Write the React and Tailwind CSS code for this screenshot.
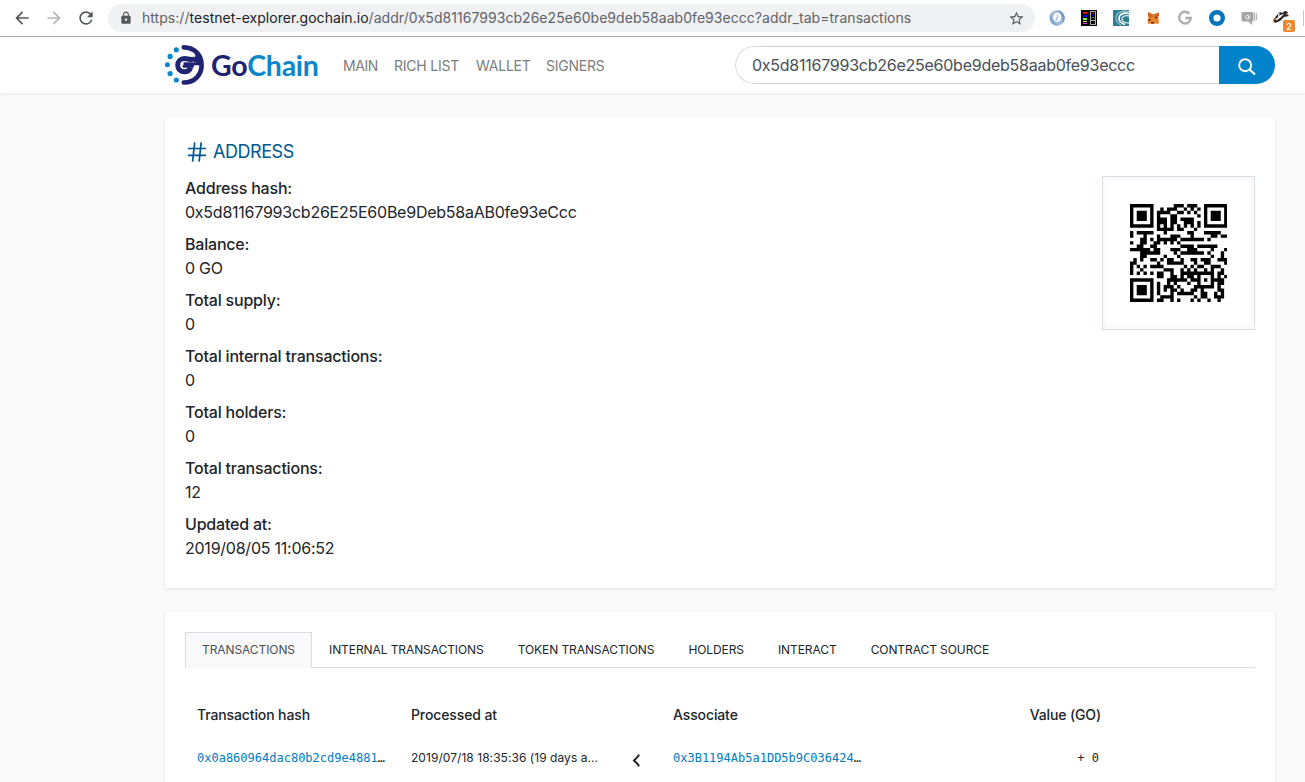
import React from "react";
import { MdArrowBack, MdArrowForward, MdRefresh, MdLock, MdStarBorder } from "react-icons/md";

const SIZE = 29;
const DATA_WORDS = 44;
const EC_WORDS = 26;

function gfMultiply(a, b) {
  let r = 0;
  for (let i = 7; i >= 0; i--) {
    r = (r << 1) ^ ((r >> 7) * 0x11d);
    r ^= ((b >> i) & 1) * a;
  }
  return r;
}

// Version 3 QR code, error correction level M, mask 2.
function buildQr(segments) {
  const bits = [];
  const push = (v, n) => {
    for (let i = n - 1; i >= 0; i--) bits.push((v >> i) & 1);
  };
  for (const [mode, text] of segments) {
    if (mode === "numeric") {
      push(1, 4);
      push(text.length, 10);
      for (let i = 0; i < text.length; i += 3) {
        const part = text.slice(i, i + 3);
        push(Number(part), part.length * 3 + 1);
      }
    } else {
      push(4, 4);
      push(text.length, 8);
      for (const c of text) push(c.charCodeAt(0), 8);
    }
  }
  push(0, 4);
  while (bits.length % 8) bits.push(0);
  for (let p = 0; bits.length < DATA_WORDS * 8; p++) push(p % 2 ? 0x11 : 0xec, 8);
  const data = [];
  for (let i = 0; i < DATA_WORDS * 8; i += 8) data.push(parseInt(bits.slice(i, i + 8).join(""), 2));

  const gen = Array(EC_WORDS).fill(0);
  gen[EC_WORDS - 1] = 1;
  let root = 1;
  for (let i = 0; i < EC_WORDS; i++) {
    for (let j = 0; j < EC_WORDS; j++) {
      gen[j] = gfMultiply(gen[j], root);
      if (j + 1 < EC_WORDS) gen[j] ^= gen[j + 1];
    }
    root = gfMultiply(root, 2);
  }
  const ec = Array(EC_WORDS).fill(0);
  for (const b of data) {
    const f = b ^ ec.shift();
    ec.push(0);
    gen.forEach((c, i) => (ec[i] ^= gfMultiply(c, f)));
  }
  const words = data.concat(ec);

  const m = Array.from({ length: SIZE }, () => Array(SIZE).fill(null));
  const set = (r, c, v) => {
    if (r >= 0 && c >= 0 && r < SIZE && c < SIZE) m[r][c] = v ? 1 : 0;
  };
  for (let i = 0; i < SIZE; i++) {
    set(6, i, i % 2 === 0);
    set(i, 6, i % 2 === 0);
  }
  for (const [r, c] of [[3, 3], [3, 25], [25, 3]]) {
    for (let a = -4; a <= 4; a++) {
      for (let b = -4; b <= 4; b++) {
        const d = Math.max(Math.abs(a), Math.abs(b));
        set(r + a, c + b, d !== 2 && d !== 4);
      }
    }
  }
  for (let a = -2; a <= 2; a++) {
    for (let b = -2; b <= 2; b++) set(22 + a, 22 + b, Math.max(Math.abs(a), Math.abs(b)) !== 1);
  }
  const format = 0b101111001111100;
  const bit = (i) => (format >> i) & 1;
  for (let i = 0; i <= 5; i++) set(i, 8, bit(i));
  set(7, 8, bit(6));
  set(8, 8, bit(7));
  set(8, 7, bit(8));
  for (let i = 9; i < 15; i++) set(8, 14 - i, bit(i));
  for (let i = 0; i < 8; i++) set(8, SIZE - 1 - i, bit(i));
  for (let i = 8; i < 15; i++) set(SIZE - 15 + i, 8, bit(i));
  set(SIZE - 8, 8, 1);

  let k = 0;
  for (let right = SIZE - 1; right >= 1; right -= 2) {
    if (right === 6) right = 5;
    for (let v = 0; v < SIZE; v++) {
      for (let j = 0; j < 2; j++) {
        const x = right - j;
        const y = ((right + 1) & 2) === 0 ? SIZE - 1 - v : v;
        if (m[y][x] === null) {
          const b = k < words.length * 8 ? (words[k >> 3] >> (7 - (k & 7))) & 1 : 0;
          k++;
          m[y][x] = b ^ (x % 3 === 0 ? 1 : 0);
        }
      }
    }
  }
  return m;
}

const QR = buildQr([
  ["byte", "0x5d"],
  ["numeric", "81167993"],
  ["byte", "cb26e25e60be9deb58aab0fe93eccc"],
]);
const QR_PATH = QR.flatMap((row, y) => row.map((v, x) => (v ? `M${x} ${y}h1v1h-1z` : ""))).join("");

function Extensions() {
  return (
    <div className="flex items-center gap-4">
      <svg width="16" height="16" viewBox="0 0 16 16">
        <circle cx="8" cy="8" r="7.7" fill="#a3bbd8" />
        <path d="M8 .3a7.7 7.7 0 0 1 5 13.5C15 9 13 3 8 .3Z" fill="#6f96c4" />
        <path d="M3 2.500C1 8 4 13 9 15.500 3 15.500-1.500 8 3 2.500Z" fill="#7d9dc5" />
        <ellipse cx="8.200" cy="7.300" rx="4" ry="4.600" fill="#fff" />
        <path d="M7.500 3.500c2.500 1.500 2.500 4.500 .2 7.500-1-.5-1.500-1.500-1.500-1.500 1.500-2 2-4 1.300-6Z" fill="#b3c8e0" />
      </svg>
      <svg width="16" height="16" viewBox="0 0 16 16" shapeRendering="crispEdges">
        <path d="M0 0h16v16H0z" fill="#000" />
        <path d="M8 1h1v14H8zM10 10h4v1h-4zM9 1h1v14H9zM14 1h1v14h-1zM9 1h6v1H9zM9 14h6v1H9z" fill="#aaa" />
        <path d="M8 0h1v16H8z" fill="#000" />
        <path d="M2 2h4v2H2z" fill="#f00" />
        <path d="M2 5h4v2H2z" fill="#00f" />
        <path d="M2 8h4v2H2z" fill="#6f3" />
        <path d="M11 7h2v1h-2z" fill="#3a3" />
        <path d="M2 11h4v1H2z" fill="#fe4" />
        <path d="M2 13h4v1H2z" fill="#f3f" />
        <path d="M11 3h2v1h-2z" fill="#f00" />
        <path d="M11 5h2v1h-2z" fill="#00f" />
      </svg>
      <svg width="16" height="16" viewBox="0 0 16 16" fill="none">
        <path d="M0 0h16v16H0z" fill="#2f7f92" />
        <path d="M16 1.500C9 0 3 3 3 8c0 3 2 5.500 5 7" stroke="#9fc9d2" strokeWidth="1.100" />
        <path d="M16 3.500C10 2 6 4.500 6 8.500c0 3 3 5 6 6" stroke="#fff" strokeWidth="1.700" />
        <path d="M16 6c-4-1-7 .5-7 3s3 4 7 4" stroke="#d5e9ed" strokeWidth="1.300" />
      </svg>
      <svg width="16" height="16" viewBox="0 0 16 16">
        <path d="m3 2 4 2h3l4-1.500-.6 5 .6 4.500-1 2-3-.5-2 .5-3-.5-2 .5-.5-3 1-4Z" fill="#e8862f" />
        <path d="m3 2 4 2 1 3-3 1-2-2Zm11 .5L10 4 9 7l3 1 2-2Z" fill="#d0661d" />
        <path d="M3.500 9h2v2h-2zM10 7h2v1.500h-2zM6 12h3v1.500H6z" fill="#6b3512" />
      </svg>
      <svg width="16" height="16" viewBox="0 0 16 16" fill="none" stroke="#b0b0b0" strokeWidth="2.400">
        <path d="M12.400 3.800A5.800 5.800 0 1 0 13.800 8H8.300" />
      </svg>
      <svg width="16" height="16" viewBox="0 0 16 16">
        <circle cx="8" cy="8" r="5.800" fill="#fff" stroke="#0673bd" strokeWidth="4.400" />
      </svg>
      <svg width="16" height="16" viewBox="0 0 16 16">
        <path d="M2 2h9a1.500 1.500 0 0 1 1.500 1.500V10A1.500 1.500 0 0 1 11 11.500V15L7.500 11.500H2A1.500 1.500 0 0 1 .5 10V3.500A1.500 1.500 0 0 1 2 2ZM13.200 2.500h1V11h-1zM15 3h.8v7H15z" fill="#a6a6a6" />
        <path d="M8 5.200v4M8 7a1.700 1.700 0 1 0 0 .4" stroke="#fff" fill="none" strokeWidth=".9" />
      </svg>
      <div className="relative h-4 w-4">
        <svg width="16" height="16" viewBox="0 0 16 16">
          <path d="m0 10 4-5 3-3 2 1 3-2 3 1-1 2 2 2-5 1-4 4-5 2Z" fill="#222" />
          <path d="m2.500 9.500 4-4 5-2-4 4-4 3ZM5 4.500l2.500-1.500L5 7Z" fill="#fff" />
          <path d="M0 9.500 3 7l-.5 2.500L0 12ZM13 3l2 1-2 1Z" fill="#c47a3e" />
        </svg>
        <span className="absolute left-[10px] top-[10px] flex h-3 w-3 items-center justify-center rounded-[2px] bg-[#eb8a2c] text-[9px] font-medium leading-none text-white">
          2
        </span>
      </div>
    </div>
  );
}

function Logo() {
  return (
    <div className="flex items-center">
      <svg width="40" height="42" viewBox="164 44 40 42" fill="none" className="-ml-px">
        <g fill="#0a87cb">
          <circle cx="176.300" cy="49.800" r="2.600" />
          <circle cx="170.100" cy="56.400" r="2.600" />
          <circle cx="167.400" cy="64.800" r="2.500" />
          <circle cx="170.100" cy="73.600" r="2.600" />
          <circle cx="176.300" cy="80" r="2.600" />
        </g>
        <g stroke="#1f2472">
          <path d="M183.800 47.300C195 47.300 201.600 55.500 201.600 65S195 82.500 183.800 82.500" strokeWidth="4.700" strokeLinecap="round" />
          <path d="M195 58.500C191.500 61 188 58.500 184.500 58.500 180.500 58.500 177.700 61.500 177.700 65.200S180.500 71.800 184.500 71.800C187.500 71.800 189.800 70.200 190.600 67.500" strokeWidth="5" />
          <path d="M183.500 63.800H201" strokeWidth="3" />
          <path d="M184 66.300H192.500" strokeWidth="3" strokeLinecap="round" />
        </g>
        <path d="M193.500 58C196 57 195.500 54.500 194.500 53L201 58v6l-7-2Z" fill="#1f2472" />
      </svg>
      <div className="ml-[7px] w-[109px] whitespace-nowrap font-['Lato',sans-serif] text-[28.500px] font-bold leading-[38px] tracking-[-0.250px] text-[#0a87cb]">
        <span className="text-[#1f2472]">Go</span>Chain
      </div>
    </div>
  );
}

const DETAILS = [
  ["Address hash:", "0x5d81167993cb26E25E60Be9Deb58aAB0fe93eCcc"],
  ["Balance:", "0 GO"],
  ["Total supply:", "0"],
  ["Total internal transactions:", "0"],
  ["Total holders:", "0"],
  ["Total transactions:", "12"],
  ["Updated at:", "2019/08/05 11:06:52"],
];

const TABS = ["INTERNAL TRANSACTIONS", "TOKEN TRANSACTIONS", "HOLDERS", "INTERACT", "CONTRACT SOURCE"];

export default function App() {
  return (
    <div className="flex h-[782px] w-[1305px] flex-col overflow-hidden bg-[#fafafa] font-['Inter',sans-serif] text-[#212529]">
      <div className="flex h-[37px] shrink-0 items-center border-b border-[#a9a9a9] bg-white">
        <div className="flex w-[108px] items-center gap-3 pl-3 text-[#55585c]">
          <MdArrowBack size={20} />
          <MdArrowForward size={20} className="text-[#b4b6b9]" />
          <MdRefresh size={20} />
        </div>
        <div className="flex h-7 w-[927px] items-center rounded-full bg-[#f0f1f3] pl-[11px] pr-[10px]">
          <MdLock size={14} className="text-[#55585c]" />
          <div className="ml-[9px] grow whitespace-nowrap text-[14px] leading-5 tracking-[0.045px] text-[#5f6368]">
            https://<span className="text-[#202124]">testnet-explorer.gochain.io</span>
            /addr/0x5d81167993cb26e25e60be9deb58aab0fe93eccc?addr_tab=transactions
          </div>
          <MdStarBorder size={17} className="text-[#55585c]" />
        </div>
        <div className="ml-[14px]">
          <Extensions />
        </div>
        <div className="ml-[14px] h-4 w-px bg-[#c8c8c8]" />
      </div>

      <header className="flex h-14 shrink-0 items-center bg-white pl-[165px] pr-[30px] shadow-[0_1px_3px_rgba(0,0,0,0.08)]">
        <Logo />
        <nav className="ml-[23px] mt-[2px] flex grow gap-4 whitespace-nowrap text-[14px] leading-5 tracking-[-0.22px] text-[#7a7d80]">
          <span className="w-[35px] tracking-[-0.400px]">MAIN</span>
          <span className="w-[66px]">RICH LIST</span>
          <span className="w-[54px]">WALLET</span>
          <span>SIGNERS</span>
        </nav>
        <div className="flex h-[38px] w-[540px] overflow-hidden rounded-full">
          <div className="flex grow items-center rounded-l-full border border-r-0 border-[#ced4da] pl-4 text-[16px] tracking-[-0.25px] text-[#495057]">
            0x5d81167993cb26e25e60be9deb58aab0fe93eccc
          </div>
          <div className="flex w-14 items-center justify-center bg-[#0083ca]">
            <svg width="18" height="18" viewBox="0 0 18 18" fill="none" stroke="#fff" strokeWidth="1.900" className="mt-1">
              <circle cx="7.200" cy="7.200" r="6" />
              <path d="m11.500 11.500 5.500 5" strokeWidth="2.300" />
            </svg>
          </div>
        </div>
      </header>

      <main className="flex flex-col gap-6 pl-[165px] pr-[30px] pt-6">
        <section className="h-[471px] bg-white px-5 pt-[22px] shadow-[0_1px_3px_rgba(0,0,0,0.1)]">
          <div className="flex h-6 items-center text-[#00568f]">
            <svg width="20" height="20" viewBox="0 0 20 20" fill="none" stroke="currentColor" strokeWidth="1.700" className="ml-[2px] mt-[2px]">
              <path d="M7.700.3 5.600 19.700M14.200.3l-2.100 19.400M1 6.500h18M1 13.300h18" />
            </svg>
            <h1 className="ml-[6px] mt-px text-[18px] leading-6 tracking-[-0.450px]">ADDRESS</h1>
          </div>
          <div className="mt-[13px] flex justify-between">
            <dl className="flex flex-col gap-2 text-[16px] leading-6 tracking-[-0.25px]">
              {DETAILS.map(([label, value]) => (
                <div key={label}>
                  <dt className="font-medium tracking-[-0.2px]">{label}</dt>
                  <dd className="last-of-type:tracking-[-0.24px]">{value}</dd>
                </div>
              ))}
            </dl>
            <div className="h-[154px] w-[153px] border border-[#d8dee3] bg-[#fafafa] p-1">
              <div className="flex h-full items-center justify-center bg-white">
                <svg width="97.500" height="98" viewBox="0 0 29 29" preserveAspectRatio="none">
                  <path d={QR_PATH} fill="#000" />
                </svg>
              </div>
            </div>
          </div>
        </section>

        <section className="h-[240px] bg-white px-5 pt-5 shadow-[0_1px_3px_rgba(0,0,0,0.1)]">
          <div className="flex h-9 border-b border-[#dcdfe2] text-[12px] leading-[34px] tracking-[-0.085px]">
            <div className="h-9 w-[127px] border border-b-0 border-[#d5dbe0] bg-[#fafafa] pl-4 text-[#495057]">TRANSACTIONS</div>
            {TABS.map((tab) => (
              <div key={tab} className="whitespace-nowrap px-[17px] pt-px">
                {tab}
              </div>
            ))}
          </div>
          <div className="mt-[26px] grid grid-cols-[214px_222px_40px_452px] text-[12px]">
            <div className="px-3 text-[14px] font-medium leading-[42px] tracking-[-0.12px]">Transaction hash</div>
            <div className="px-3 text-[14px] font-medium leading-[42px] tracking-[-0.12px]">Processed at</div>
            <div />
            <div className="flex justify-between px-3 text-[14px] font-medium leading-[42px] tracking-[-0.12px]">
              <span>Associate</span>
              <span>Value (GO)</span>
            </div>
            <div className="whitespace-nowrap pl-3 font-['DejaVu_Sans_Mono',monospace] leading-[44px]">
              <span className="text-[#007bc4]">0x0a860964dac80b2cd9e4881</span>…
            </div>
            <div className="whitespace-nowrap pl-3 leading-[44px] tracking-[0.05px]">2019/07/18 18:35:36 (19 days a...</div>
            <div className="pl-[11px] pt-[18px]">
              <svg width="9" height="13" viewBox="0 0 9 13" fill="none" stroke="#212529" strokeWidth="2">
                <path d="M7 .7C6 3.500 3.500 5 2 6.500 3.500 8 6 9.500 7 12.300" />
              </svg>
            </div>
            <div className="flex justify-between pl-3 pr-[14px] font-['DejaVu_Sans_Mono',monospace] leading-[44px]">
              <span>
                <span className="text-[#007bc4]">0x3B1194Ab5a1DD5b9C036424</span>…
              </span>
              <span>+ 0</span>
            </div>
          </div>
        </section>
      </main>
    </div>
  );
}
